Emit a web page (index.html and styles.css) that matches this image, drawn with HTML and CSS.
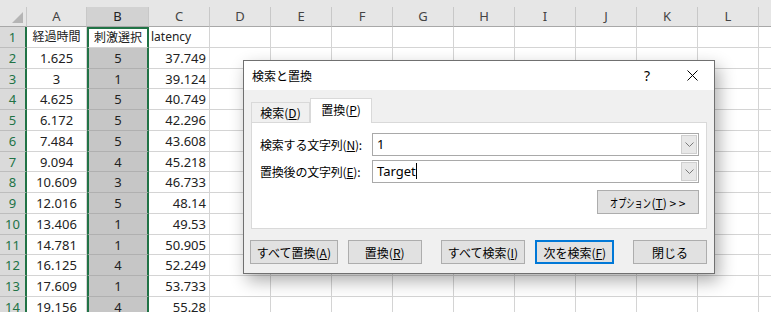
FILE: index.html
```html
<!DOCTYPE html>
<html lang="ja">
  <head>
    <meta charset="UTF-8" />
    <title>検索と置換</title>
    <link rel="stylesheet" href="styles.css">
  </head>
  <body>
    <div class="sheet" id="sheet">
      <div class="corner"><span class="tri"></span></div>
    </div>

    <div class="dialog">
      <div class="titlebar">
        <span class="title">検索と置換</span>
        <span class="help">?</span>
        <span class="close">
          <svg width="11" height="11" viewBox="0 0 11 11">
            <path d="M0.5 0.5L10.5 10.5M10.5 0.5L0.5 10.5" stroke="#000" stroke-width="1" fill="none" />
          </svg>
        </span>
      </div>
      <div class="dlg-body">
        <div class="tabs">
          <div class="tab">検索(<u>D</u>)</div>
          <div class="tab active">置換(<u>P</u>)</div>
        </div>
        <div class="panel">
          <div class="field">
            <label>検索する文字列(<u>N</u>):</label>
            <div class="combo">
              <span class="value">1</span>
              <span class="drop">
                <svg width="9" height="5" viewBox="0 0 9 5">
                  <path d="M0.5 0.5L4.5 4.5L8.5 0.5" stroke="#7a7a7a" fill="none" />
                </svg>
              </span>
            </div>
          </div>
          <div class="field">
            <label>置換後の文字列(<u>E</u>):</label>
            <div class="combo">
              <span class="value">Target<span class="caret"></span></span>
              <span class="drop">
                <svg width="9" height="5" viewBox="0 0 9 5">
                  <path d="M0.5 0.5L4.5 4.5L8.5 0.5" stroke="#7a7a7a" fill="none" />
                </svg>
              </span>
            </div>
          </div>
          <div class="opt-row">
            <button class="btn opt"><span class="kana">オプション</span>(<u>T</u>) &gt; &gt;</button>
          </div>
        </div>
        <div class="actions">
          <button class="btn b-all">すべて置換(<u>A</u>)</button>
          <button class="btn b-rep">置換(<u>R</u>)</button>
          <button class="btn b-find-all">すべて検索(<u>I</u>)</button>
          <button class="btn b-next default">次を検索(<u>F</u>)</button>
          <button class="btn b-close">閉じる</button>
        </div>
      </div>
    </div>

    <script>
      const COLS = ["A", "B", "C", "D", "E", "F", "G", "H", "I", "J", "K", "L", "M"];
      const ROWS = [
        ["経過時間", "刺激選択", "latency"],
        ["1.625", "5", "37.749"],
        ["3", "1", "39.124"],
        ["4.625", "5", "40.749"],
        ["6.172", "5", "42.296"],
        ["7.484", "5", "43.608"],
        ["9.094", "4", "45.218"],
        ["10.609", "3", "46.733"],
        ["12.016", "5", "48.14"],
        ["13.406", "1", "49.53"],
        ["14.781", "1", "50.905"],
        ["16.125", "4", "52.249"],
        ["17.609", "1", "53.733"],
        ["19.156", "4", "55.28"],
      ];

      const sheet = document.getElementById("sheet");

      function cell(cls, text) {
        const div = document.createElement("div");
        div.className = cls;
        div.textContent = text || "";
        sheet.appendChild(div);
      }

      // column headers
      COLS.forEach((c) => cell(c === "B" ? "colhead picked" : "colhead", c));

      // rows (first row holds the text headings)
      ROWS.forEach((row, i) => {
        cell("rowhead", String(i + 1));
        COLS.forEach((c, j) => {
          let cls = i === 0 ? "cell heading" : "cell";
          if (j === 0) cls += " center";
          if (j === 1) cls += i === 0 ? " center sel active" : " center sel picked";
          if (j === 2) cls += i === 0 ? " left" : " right";
          cell(cls, row[j]);
        });
      });
    </script>
  </body>
</html>
```

FILE: styles.css
```css
body {
  margin: 0;
  width: 771px;
  height: 312px;
  overflow: hidden;
  background: #fff;
  font-family: "Noto Sans", "Noto Sans CJK JP", sans-serif;
  position: relative;
}

/* ---------- sheet ---------- */
.sheet {
  display: grid;
  grid-template-columns: 27px 60px 62px 61px repeat(10, 61px);
  grid-template-rows: 20px repeat(14, 20.75px);
  border-top: 7px solid #e6e6e6;
  font-size: 13px;
  color: #222;
}
.corner {
  background: #e6e6e6;
  border-right: 1px solid #c8c8c8;
  border-bottom: 1px solid #a8a8a8;
  box-sizing: border-box;
  position: relative;
}
.tri {
  position: absolute;
  right: 3px;
  bottom: 3px;
  width: 0;
  height: 0;
  border-left: 11px solid transparent;
  border-bottom: 11px solid #b5b5b5;
}
.colhead {
  background: #e6e6e6;
  color: #444;
  text-align: center;
  line-height: 19px;
  border-right: 1px solid #c8c8c8;
  border-bottom: 1px solid #a8a8a8;
  box-sizing: border-box;
}
.colhead.picked {
  background: #d2d2d2;
  color: #222;
}
.rowhead {
  background: #dadada;
  color: #217346;
  text-align: center;
  line-height: 20px;
  border-right: 2px solid #217346;
  border-bottom: 1px solid #bdbdbd;
  box-sizing: border-box;
}
.cell {
  border-right: 1px solid #d4d4d4;
  border-bottom: 1px solid #d4d4d4;
  box-sizing: border-box;
  line-height: 20px;
  white-space: nowrap;
  overflow: hidden;
  padding: 0 3px;
}
.cell.heading {
  font-size: 12px;
}
.center { text-align: center; }
.right { text-align: right; }
.left { text-align: left; padding-left: 2px; }
.cell.sel {
  border-left: 2px solid #217346;
  border-right: 2px solid #217346;
}
.cell.picked {
  background: #c6c6c6;
  border-bottom-color: #b0b0b0;
}
.cell.active {
  background: #fff;
  border-top: 2px solid #217346;
  line-height: 18px;
}

/* ---------- dialog ---------- */
.dialog {
  position: absolute;
  left: 243px;
  top: 60px;
  width: 472px;
  height: 214px;
  box-sizing: border-box;
  border: 1px solid #707070;
  background: #f0f0f0;
  box-shadow: 4px 7px 16px rgba(0, 0, 0, 0.32);
  font-family: "Noto Sans CJK JP", sans-serif;
  font-size: 12px;
  color: #000;
}
.titlebar {
  height: 29px;
  background: #fff;
  display: flex;
  align-items: center;
}
.title {
  flex: 1;
  padding-left: 8px;
}
.help {
  width: 46px;
  text-align: center;
  font-family: "Noto Sans", sans-serif;
  font-size: 14px;
}
.close {
  width: 44px;
  display: flex;
  justify-content: center;
}
.dlg-body {
  padding: 8px 7px 0;
}
.tabs {
  display: flex;
  align-items: flex-end;
  height: 24px;
}
.tab {
  width: 59px;
  height: 20px;
  box-sizing: border-box;
  border: 1px solid #d9d9d9;
  border-bottom: none;
  text-align: center;
  line-height: 19px;
}
.tab.active {
  width: 62px;
  height: 25px;
  background: #fff;
  margin-bottom: -1px;
  line-height: 22px;
  position: relative;
  z-index: 1;
}
u {
  text-underline-offset: 1px;
}
.panel {
  height: 107px;
  box-sizing: border-box;
  border: 1px solid #d9d9d9;
  background: #fff;
  padding: 10px 7px 0 8px;
}
.field {
  display: flex;
  align-items: center;
  height: 23px;
  margin-bottom: 4px;
}
.field label {
  width: 112px;
  flex-shrink: 0;
  white-space: nowrap;
  letter-spacing: -0.2px;
}
.combo {
  flex: 1;
  height: 23px;
  box-sizing: border-box;
  border: 1px solid #a9a9a9;
  display: flex;
}
.value {
  flex: 1;
  padding-left: 4px;
  line-height: 21px;
  font-family: "Noto Sans", "Noto Sans CJK JP", sans-serif;
  font-size: 13px;
}
.caret {
  display: inline-block;
  width: 1px;
  height: 16px;
  background: #000;
  vertical-align: -3px;
}
.drop {
  width: 16px;
  margin: 1px;
  background: #e8e8e8;
  border: 1px solid #cfcfcf;
  box-sizing: border-box;
  display: flex;
  align-items: center;
  justify-content: center;
}
.opt-row {
  display: flex;
  justify-content: flex-end;
  margin-top: 7px;
}
.btn {
  height: 24px;
  box-sizing: border-box;
  background: #e1e1e1;
  border: 1px solid #adadad;
  font-family: "Noto Sans CJK JP", sans-serif;
  font-size: 12px;
  color: #000;
  padding: 0;
  white-space: nowrap;
}
/* half-width katakana look: squeeze the full-width word */
.kana {
  display: inline-block;
  transform: scaleX(0.68);
  transform-origin: 0 50%;
  margin-right: -19px;
}
.opt {
  width: 102px;
}
.actions {
  display: flex;
  margin-top: 11px;
  margin-left: -1px;
}
.b-all { width: 88px; }
.b-rep { width: 74px; margin-left: 10px; }
.b-find-all { width: 85px; margin-left: 19px; }
.b-next { width: 79px; margin-left: 10px; }
.b-close { width: 74px; margin-left: 19px; }
.default {
  border: 2px solid #0078d7;
}
```
